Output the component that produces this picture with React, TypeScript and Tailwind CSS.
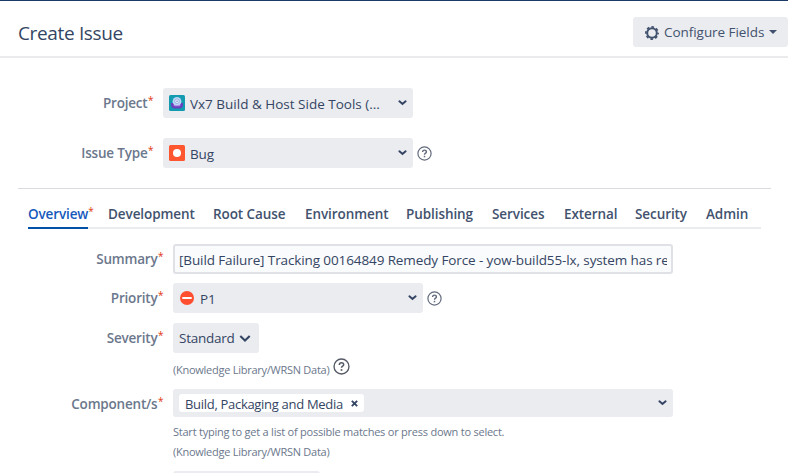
import React from "react";

function Label({ children, width }: { children: string; width: string }) {
  return (
    <div className={`${width} flex shrink-0 justify-end font-[550] text-[#6b778c] text-[13.5px] leading-[20px] tracking-[-0.2px] whitespace-nowrap`}>
      {children}
      <span className="-mr-[0.5px] ml-[0.5px] text-[#de350b] text-[10px] leading-[15px] font-normal tracking-normal">*</span>
    </div>
  );
}

function Chevron({ large = false }: { large?: boolean }) {
  return large ? (
    <svg className="h-[9px] w-[12px] shrink-0" viewBox="0 0 12 9">
      <path d="M1.3 2 6 6.5 10.7 2" fill="none" stroke="#344563" strokeWidth="2.1" />
    </svg>
  ) : (
    <svg className="h-[6px] w-[9px] shrink-0" viewBox="0 0 9 6">
      <path d="M1.4 1.3 4.5 4 7.6 1.3" fill="none" stroke="#344563" strokeWidth="2" strokeLinecap="round" />
    </svg>
  );
}

function Help({ large = false }: { large?: boolean }) {
  return (
    <svg className={large ? "h-[17px] w-[17px] shrink-0" : "h-[15px] w-[15px] shrink-0"} viewBox="0 0 15 15" fill="none" stroke={large ? "#555a66" : "#626b7d"}>
      <circle cx="7.5" cy="7.5" r="6.6" strokeWidth="1.2" />
      <path d="M5.6 6.1C5.6 3.5 9.4 3.6 9.4 5.9 9.4 7.3 7.5 7.1 7.5 8.7" strokeWidth="1.4" />
      <path d="M7.5 9.8v1.5" strokeWidth="1.5" />
    </svg>
  );
}

function ProjectAvatar() {
  return (
    <svg className="h-4 w-4 shrink-0" viewBox="0 0 16 16">
      <rect width="16" height="16" rx="1.5" fill="#129bb0" />
      <path d="M2 8h12v1.6a4 4 0 0 1-4 4H6a4 4 0 0 1-4-4z" fill="#6740bd" />
      <circle cx="8" cy="6.4" r="4.4" fill="#b9d5f7" />
      <path d="M4 9.4c2 1.5 6 1.5 8 0l-1.2 1.8H5.2z" fill="#c58be8" />
      <circle cx="8" cy="6.2" r="2.3" fill="#e4f1ff" stroke="#8fa6dc" strokeWidth=".8" />
      <path d="M6.9 6.2h2.2" stroke="#6e82c2" strokeWidth=".8" />
    </svg>
  );
}

function BugIcon() {
  return (
    <svg className="h-4 w-4 shrink-0" viewBox="0 0 16 16">
      <rect width="16" height="16" rx="1.5" fill="#ff5630" />
      <circle cx="8" cy="8" r="4" fill="#fff" />
    </svg>
  );
}

function BlockerIcon() {
  return (
    <svg className="h-[14px] w-[14px] shrink-0" viewBox="0 0 14 14">
      <circle cx="7" cy="7" r="7" fill="#ff4f30" />
      <path d="M2.3 7h9.4" stroke="#fff" strokeWidth="2" />
    </svg>
  );
}

function GearIcon() {
  return (
    <svg className="mt-px h-[14px] w-[14px] shrink-0" viewBox="0 0 14 14" fill="none" stroke="#42526e">
      <circle cx="7" cy="7" r="4.8" strokeWidth="2" />
      <circle cx="7" cy="7" r="6.1" strokeWidth="1.7" strokeDasharray="2.6 2.191" strokeDashoffset="1.3" />
    </svg>
  );
}

const tabs = [
  { name: "Development", cls: "ml-5 w-[85px]" },
  { name: "Root Cause", cls: "ml-5 w-[72px]" },
  { name: "Environment", cls: "ml-5 w-[81px]" },
  { name: "Publishing", cls: "ml-5 w-[66px]" },
  { name: "Services", cls: "ml-5 w-[52px]" },
  { name: "External", cls: "ml-5 w-[51px]" },
  { name: "Security", cls: "ml-5 w-[51px]" },
  { name: "Admin", cls: "ml-5 w-[42px]" },
];

export default function App() {
  return (
    <main className="h-[473px] w-[788px] overflow-hidden bg-white font-['Open_Sans','Noto_Sans',sans-serif] text-[13.5px] text-[#344563]">
      <div className="h-px bg-[#1b3a68]" />
      <header className="flex h-[57px] justify-between border-b-2 border-[#ebebed] pl-[18px]">
        <h1 className="mt-[18px] text-[19px] leading-7 tracking-[-0.35px] whitespace-nowrap text-[#344563]">Create Issue</h1>
        <button className="mt-4 flex h-[30px] w-[155px] items-center rounded-[3px] bg-[#ebecf0] pl-[12px] whitespace-nowrap text-[#42526e]">
          <GearIcon />
          <span className="ml-[5px] w-[100px] text-left tracking-[-0.05px]">Configure Fields</span>
          <svg className="ml-[5px] h-1 w-[8px]" viewBox="0 0 8 4"><path d="M0 0h8L4 4z" fill="#42526e" /></svg>
        </button>
      </header>

      <section className="mr-[17px] ml-[18px] flex h-[131px] flex-col gap-5 border-b border-[#d9dbe0] pt-[30px]">
        <div className="flex">
          <div className="pt-[5px]"><Label width="w-[135px]">Project</Label></div>
          <div className="ml-[10px] flex h-[30px] w-[250px] items-center rounded-[3px] bg-[#ebecf0] px-[6px]">
            <ProjectAvatar />
            <span className="ml-[5px] flex-1 pt-[2px] whitespace-nowrap">Vx7 Build &amp; Host Side Tools (...</span>
            <Chevron />
          </div>
        </div>
        <div className="flex items-center">
          <Label width="w-[135px]">Issue Type</Label>
          <div className="mr-[4px] ml-[10px] flex h-[30px] w-[250px] items-center rounded-[3px] bg-[#ebecf0] px-[6px]">
            <BugIcon />
            <span className="ml-[5px] flex-1 pt-[2px] tracking-[-0.1px]">Bug</span>
            <Chevron />
          </div>
          <Help />
        </div>
      </section>

      <nav className="mr-[27px] ml-[28px] flex h-[40px] border-b-2 border-[#ebecf0] pt-[15px] font-[570] text-[#42526e]">
        <div className="-mb-[2px] flex w-[60px] border-b-2 border-[#0052a8] leading-5 tracking-[-0.12px] whitespace-nowrap text-[#1558bc]">
          Overview<span className="text-[10px] leading-[15px] font-normal text-[#de350b]">*</span>
        </div>
        {tabs.map((t) => (
          <div key={t.name} className={`${t.cls} shrink-0 leading-5 tracking-[-0.08px] whitespace-nowrap`}>{t.name}</div>
        ))}
      </nav>

      <section className="ml-[18px] pt-[15px]">
        <div className="flex">
          <div className="pt-[5px]"><Label width="w-[145px]">Summary</Label></div>
          <div className="ml-[10px] flex h-[30px] w-[500px] items-center rounded-[3px] border-2 border-[#dfe1e6] bg-[#fafbfc] px-1">
            <div className="w-[488px] overflow-hidden pt-[2px] tracking-[-0.11px] whitespace-nowrap">[Build Failure] Tracking 00164849 Remedy Force - yow-build55-lx, system has re</div>
          </div>
        </div>
        <div className="mt-[9px] flex items-center">
          <Label width="w-[145px]">Priority</Label>
          <div className="mr-[4px] ml-[10px] flex h-[30px] w-[250px] items-center rounded-[3px] bg-[#ebecf0] pr-[6px] pl-[7px]">
            <BlockerIcon />
            <span className="ml-[6px] flex-1 pt-[2px]">P1</span>
            <Chevron />
          </div>
          <Help />
        </div>
        <div className="mt-[10px] flex items-center">
          <Label width="w-[145px]">Severity</Label>
          <div className="ml-[10px] flex h-[30px] w-[86px] items-center justify-between rounded-[3px] bg-[#ebecf0] pr-[8px] pl-[6px]">
            <span className="tracking-[-0.25px]">Standard</span>
            <Chevron large />
          </div>
        </div>
        <div className="ml-[155px] flex h-[36px] pt-[5px] text-[11px] text-[#6b778c]">
          <span className="w-[160px] pt-[4px] leading-4 tracking-[-0.26px] whitespace-nowrap">(Knowledge Library/WRSN Data)</span>
          <Help large />
        </div>
        <div className="flex items-center">
          <div className="pt-[2px]"><Label width="w-[145px]">Component/s</Label></div>
          <div className="ml-[10px] flex h-[28px] w-[500px] items-center justify-between rounded-[3px] bg-[#ebecf0] pr-[6px] pl-[6px]">
            <div className="flex h-[18px] w-[185px] items-center rounded-[3px] bg-white pl-[6px] whitespace-nowrap">
              <span className="w-[160px] shrink-0 pt-[2px] text-[13px] leading-4 tracking-[-0.3px]">Build, Packaging and Media</span>
              <svg className="ml-[6px] h-[7px] w-[7px] shrink-0" viewBox="0 0 6 6"><path d="m.7.7 4.6 4.6m0-4.6L.7 5.3" stroke="#344563" strokeWidth="1.6" /></svg>
            </div>
            <Chevron />
          </div>
        </div>
        <div className="ml-[155px] pt-[5px] text-[11px] leading-5 tracking-[-0.23px] text-[#6b778c]">
          <p>Start typing to get a list of possible matches or press down to select.</p>
          <p className="tracking-[-0.26px]">(Knowledge Library/WRSN Data)</p>
        </div>
        <div className="mt-[9px] ml-[155px] h-[30px] w-[147px] rounded-t-[3px] bg-[#ebecf0]" />
      </section>
    </main>
  );
}
